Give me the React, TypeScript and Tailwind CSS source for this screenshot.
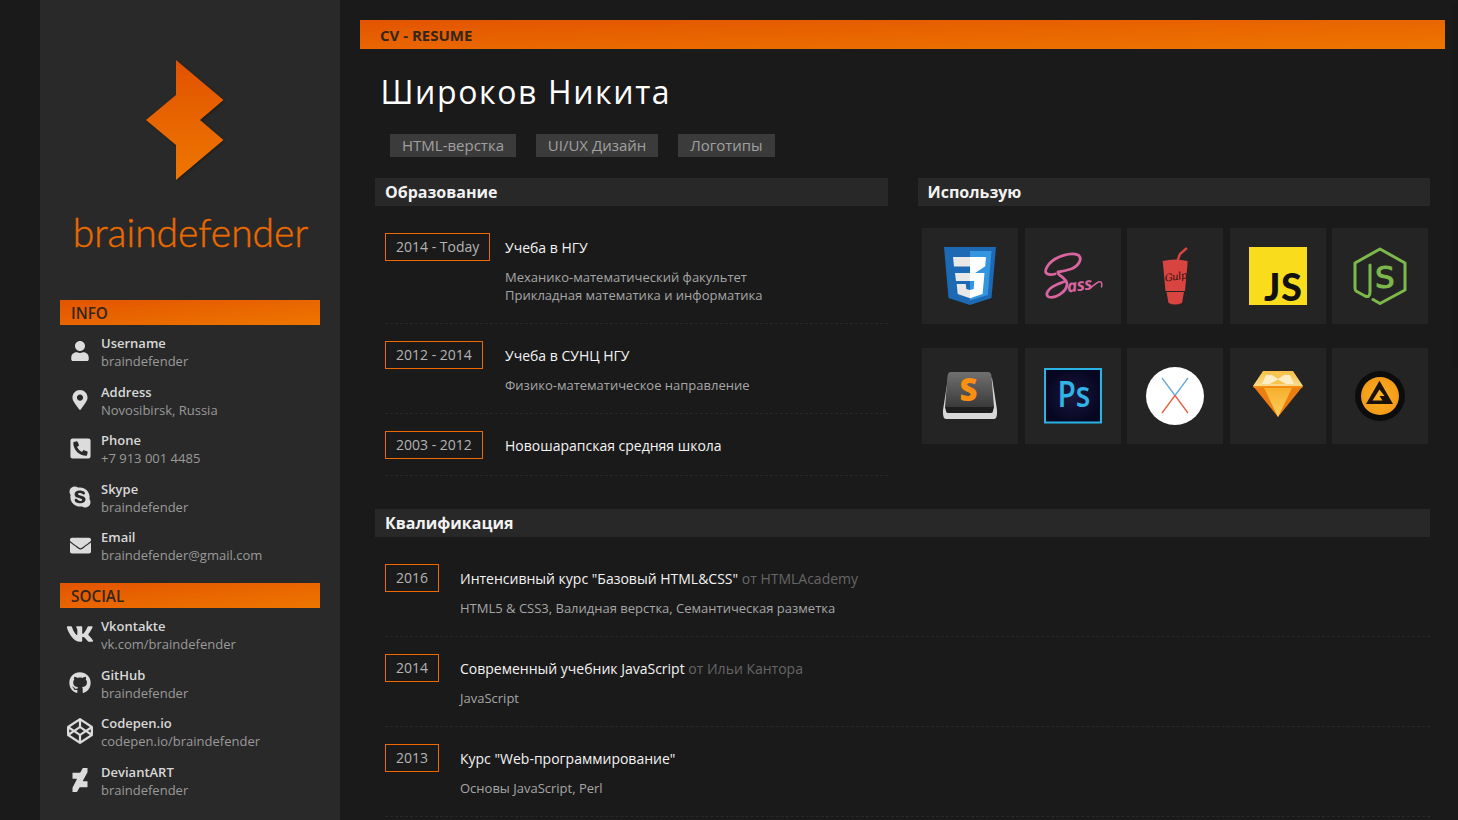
import React from "react";
import { FaUser, FaMapMarkerAlt, FaPhoneSquareAlt, FaSkype, FaEnvelope, FaVk, FaGithub, FaCodepen, FaDeviantart } from "react-icons/fa";

const bar = "bg-gradient-to-br from-[#e35400] to-[#ee7600]";

function Logo() {
  return (
    <svg viewBox="60 60 260 120" className="block w-[260px] h-[120px] drop-shadow-[1px_1px_1px_rgba(0,0,0,0.3)]">
      <defs>
        <linearGradient id="lg" x1="0" y1="0" x2="0" y2="1">
          <stop offset="0" stopColor="#e25200" />
          <stop offset="1" stopColor="#ee7700" />
        </linearGradient>
      </defs>
      <polygon points="176,60 223.5,100 200,120 223.5,140 176,180 176,145 146,120 176,95" fill="url(#lg)" />
    </svg>
  );
}

function Row({ icon, name, value }: { icon: React.ReactNode; name: string; value: string }) {
  return (
    <div className="flex items-center h-[36px]">
      <div className="w-[41px] flex justify-center text-[#dcdcdc] shrink-0 pr-[1px] pb-[2px]">{icon}</div>
      <div className="text-[13px] leading-[18px]">
        <div className="font-semibold text-[#d8d8d8]">{name}</div>
        <div className="text-[#9a9a9a]">{value}</div>
      </div>
    </div>
  );
}

function SideHead({ children }: { children: React.ReactNode }) {
  return <div className={`${bar} h-[25px] pl-[11px] text-[15.3px] leading-[27px] font-semibold text-[#33261c]`}>{children}</div>;
}

function Sidebar() {
  return (
    <aside className="w-[300px] ml-[40px] shrink-0 bg-[#292929] px-[20px] pt-[60px]">
      <Logo />
      <div className="h-[120px] pt-[24px] pl-[1px] text-center text-[39px] leading-[56px] text-[#ea6a00] [-webkit-text-stroke:0.45px_#ea6a00]" style={{ fontFamily: "Lato, sans-serif", fontWeight: 300 }}>
        braindefender
      </div>
      <SideHead>INFO</SideHead>
      <div className="flex flex-col gap-[12.5px] pt-[9px] h-[258px]">
        <Row icon={<FaUser size={20} />} name="Username" value="braindefender" />
        <Row icon={<FaMapMarkerAlt size={20} />} name="Address" value="Novosibirsk, Russia" />
        <Row icon={<FaPhoneSquareAlt size={23} />} name="Phone" value="+7 913 001 4485" />
        <Row icon={<FaSkype size={24} />} name="Skype" value="braindefender" />
        <Row icon={<FaEnvelope size={21} />} name="Email" value="braindefender@gmail.com" />
      </div>
      <SideHead>SOCIAL</SideHead>
      <div className="flex flex-col gap-[12.5px] pt-[9px]">
        <Row icon={<FaVk size={28} />} name="Vkontakte" value="vk.com/braindefender" />
        <Row icon={<FaGithub size={22} />} name="GitHub" value="braindefender" />
        <Row icon={<FaCodepen size={26} />} name="Codepen.io" value="codepen.io/braindefender" />
        <Row icon={<FaDeviantart size={24} />} name="DeviantART" value="braindefender" />
      </div>
    </aside>
  );
}

function SectionHead({ children }: { children: React.ReactNode }) {
  return <h2 className="h-[28px] bg-[#282828] pl-[10px] text-[16px] leading-[28px] font-bold text-[#f2f2f2]">{children}</h2>;
}

function Item({
  year, title, from, lines, indent, descPad,
}: { year: string; title: string; from?: string; lines?: string[]; indent: string; descPad: string }) {
  return (
    <div className={`ml-[10px] border-b border-dashed border-[#282828] pt-[17px] ${lines ? "pb-[19px]" : "pb-[16px]"}`}>
      <div className="flex">
        <div className={`${indent} shrink-0 flex items-start`}>
          <span className="h-[28px] border border-[#ee6a00] px-[10px] text-[14px] leading-[26px] text-[#b4b4b4] whitespace-nowrap">{year}</span>
        </div>
        <div className="text-[14px] leading-[28px] pt-[1px] h-[28px] text-[#f4f4f4] whitespace-nowrap">
          {title}
          {from && <span className="text-[#666666]"> {from}</span>}
        </div>
      </div>
      {lines && (
        <div className={`mt-[7px] text-[13px] leading-[18px] text-[#a6a6a6] ${descPad}`}>
          {lines.map((l) => (
            <div key={l}>{l}</div>
          ))}
        </div>
      )}
    </div>
  );
}

function Css3() {
  return (
    <svg viewBox="0 0 96 96" className="w-full h-full">
      <path d="M22 19H74L69.5 70L48 77L26.5 70Z" fill="#1d69b4" />
      <path d="M48 23H69.5L65.8 67L48 72.5Z" fill="#3395df" />
      <path d="M31 29H48V38.5H32Z M33 45H48V53H34Z M34.7 56H43.8L44.3 61L48 62V70.3L35.7 66Z" fill="#e8e8e8" />
      <path d="M48 29H64L63.2 38.5H48Z M48 38.5H63L53 45H48Z M48 45H62.5L60.6 66L48 70.3V62L51.7 61L52.2 53H48Z" fill="#fff" />
    </svg>
  );
}

function Sass() {
  return (
    <svg viewBox="0 0 96 96" className="w-full h-full">
      <path d="M30 46C20 48 18 44 24 36C31 28 46 24 53 27C58 30 54 38 46 41C40 43 33 44 33 44C31 47 43 50 42 57C41 64 30 71 24 69C19 67 23 60 33 56C36 55 38 54 41 53" fill="none" stroke="#d8659f" strokeWidth="2.8" strokeLinecap="round" />
      <path d="M65 60C69 58 73 52 76 54C77 55 77 57 76.5 59" fill="none" stroke="#d8659f" strokeWidth="1.4" strokeLinecap="round" />
      <text x="42" y="63" fontFamily="'Open Sans', sans-serif" fontStyle="italic" fontWeight="700" fontSize="17" fill="#d8659f" letterSpacing="-0.4" transform="rotate(-8 54 58)">ass</text>
    </svg>
  );
}

function Gulp() {
  return (
    <svg viewBox="0 0 96 96" className="w-full h-full">
      <path d="M50 34L53 26L60 20" fill="none" stroke="#d8443f" strokeWidth="2.4" />
      <path d="M35.5 33Q48 30 60.5 33L60.5 36L58 63H38.5L36 36Z" fill="#d8443f" />
      <path d="M39.5 64H57L55 75Q48 78 41.5 75Z" fill="#d8443f" />
      <text x="37.5" y="52" fontFamily="'DejaVu Serif', serif" fontStyle="italic" fontSize="10" fill="#2a0f0e" letterSpacing="-0.5" transform="rotate(-8 48 48)">Gulp</text>
    </svg>
  );
}

function Js() {
  return (
    <svg viewBox="0 0 96 96" className="w-full h-full">
      <rect x="19" y="19" width="58" height="58" fill="#f9dd1d" />
      <text x="34" y="72.5" fontFamily="Lato, sans-serif" fontWeight="900" fontSize="38" fill="#111" letterSpacing="0.5">JS</text>
    </svg>
  );
}

function Node() {
  return (
    <svg viewBox="0 0 96 96" className="w-full h-full">
      <path d="M38 37V64Q38 70 33 68L24 63Q23 62 23 60V35L48 21L73 35V62L48 75.5L41 71.5" fill="none" stroke="#7cb84a" strokeWidth="3" strokeLinejoin="round" strokeLinecap="round" />
      <text x="43" y="60" fontFamily="'DejaVu Sans', sans-serif" fontSize="31" fill="#7cb84a" stroke="#7cb84a" strokeWidth="1">S</text>
    </svg>
  );
}

function Sublime() {
  return (
    <svg viewBox="0 0 96 96" className="w-full h-full">
      <defs>
        <linearGradient id="sb" x1="0" y1="0" x2="0" y2="1">
          <stop offset="0" stopColor="#707070" />
          <stop offset="1" stopColor="#3a3a3a" />
        </linearGradient>
      </defs>
      <path d="M26 30H70L75 62Q75.5 71 72 71H24Q20.5 71 21 62Z" fill="#d8d8d8" />
      <path d="M29 24H66Q69 24 69.5 28L72 59H23L25.5 28Q26 24 29 24Z" fill="url(#sb)" />
      <path d="M23 59H72L71 63Q71 65 69 65H26Q24 65 24 63Z" fill="#1e1e1e" />
      <text x="37.5" y="53" fontFamily="'Open Sans', sans-serif" fontWeight="800" fontSize="31" fill="#fb8f10">S</text>
    </svg>
  );
}

function Ps() {
  return (
    <svg viewBox="0 0 96 96" className="w-full h-full">
      <defs>
        <radialGradient id="ps">
          <stop offset="0" stopColor="#1c1740" />
          <stop offset="1" stopColor="#070722" />
        </radialGradient>
      </defs>
      <rect x="20" y="21" width="56" height="53.5" fill="url(#ps)" stroke="#2ab4e6" strokeWidth="2" />
      <text transform="translate(32.5 59) scale(0.83 1)" fontFamily="'Open Sans', sans-serif" fontWeight="600" fontSize="36" fill="#31b4e6">Ps</text>
    </svg>
  );
}

function Mac() {
  return (
    <svg viewBox="0 0 96 96" className="w-full h-full">
      <circle cx="48" cy="48" r="29" fill="#fff" />
      <path d="M35 30L48 47.5M61 30L48 47.5" stroke="#69a9d8" strokeWidth="1.3" />
      <path d="M35 65L48 47.5M61 65L48 47.5" stroke="#e5603f" strokeWidth="1.3" />
    </svg>
  );
}

function Sketch() {
  return (
    <svg viewBox="0 0 96 96" className="w-full h-full">
      <defs>
        <linearGradient id="sk1" x1="0" y1="0" x2="0" y2="1">
          <stop offset="0" stopColor="#f9c046" />
          <stop offset="1" stopColor="#f7dc8c" />
        </linearGradient>
        <linearGradient id="sk2" x1="0" y1="0" x2="0" y2="1">
          <stop offset="0" stopColor="#f7ae2c" />
          <stop offset="1" stopColor="#fbd05e" />
        </linearGradient>
      </defs>
      <polygon points="33,23 63,23 73,38 23,38" fill="url(#sk1)" />
      <polygon points="23,38 73,38 48,69" fill="#ec7d10" />
      <polygon points="34,40 62,40 48,69" fill="url(#sk2)" />
      <polygon points="23,38 73,38 72,40 24,40" fill="#f38a12" />
      <polygon points="36,27 60,27 64,36 32,36" fill="#fdeec6" />
      <polygon points="42,27 54,27 48,31" fill="#f9c350" />
      <polygon points="40,36 56,36 48,31.5" fill="#f9c350" />
    </svg>
  );
}

function Aimp() {
  return (
    <svg viewBox="0 0 96 96" className="w-full h-full">
      <defs>
        <radialGradient id="am">
          <stop offset="0" stopColor="#fdb322" />
          <stop offset="1" stopColor="#f39a18" />
        </radialGradient>
      </defs>
      <circle cx="48" cy="48" r="25" fill="#0c0c0c" />
      <circle cx="48" cy="48" r="19" fill="url(#am)" />
      <path d="M47.5 32.7L61 56H34ZM47.5 41.5L40.5 52.5H50.5L47.5 48H52.5L47.5 41.5Z" fill="#1a1208" fillRule="evenodd" />
    </svg>
  );
}

const row1 = [Css3, Sass, Gulp, Js, Node];
const row2 = [Sublime, Ps, Mac, Sketch, Aimp];

function Tile({ C }: { C: () => React.ReactNode }) {
  return (
    <div className="w-[96px] h-[96px] bg-[#242424]">
      <C />
    </div>
  );
}

export default function App() {
  return (
    <div className="relative flex h-[820px] overflow-hidden bg-[#1a1a1a]" style={{ fontFamily: "'Open Sans', sans-serif" }}>
      <Sidebar />
      <main className="flex-1 ml-[20px] mr-[13px] pt-[20px]">
        <div className={`${bar} h-[29px] pl-[20px] text-[15px] leading-[30px] font-bold text-[#33261c]`}>CV - RESUME</div>
        <h1 className="pl-[20.5px] pt-[21px] h-[85px] text-[32px] leading-[44px] tracking-[1.6px] font-medium text-white">Широков Никита</h1>
        <div className="flex gap-[19.8px] pl-[30px] h-[44px]">
          {["HTML-верстка", "UI/UX Дизайн", "Логотипы"].map((t) => (
            <span key={t} className="h-[23px] bg-[#3b3b3b] px-[12px] text-[15px] leading-[22px] text-[#a0a0a0]">{t}</span>
          ))}
        </div>
        <div className="ml-[15px] w-[1055px]">
          <div className="grid grid-cols-2 gap-[30px] h-[331px]">
            <section>
              <SectionHead>Образование</SectionHead>
              <div className="pt-[10px]">
                <Item indent="w-[120px]" descPad="pl-[120px]" year="2014 - Today" title="Учеба в НГУ" lines={["Механико-математический факультет", "Прикладная математика и информатика"]} />
                <Item indent="w-[120px]" descPad="pl-[120px]" year="2012 - 2014" title="Учеба в СУНЦ НГУ" lines={["Физико-математическое направление"]} />
                <Item indent="w-[120px]" descPad="pl-[120px]" year="2003 - 2012" title="Новошарапская средняя школа" />
              </div>
            </section>
            <section>
              <SectionHead>Использую</SectionHead>
              <div className="pl-[4.6px] pr-[1.9px] pt-[22px] flex flex-col gap-[24px]">
                <div className="flex justify-between">{row1.map((C, i) => <Tile key={i} C={C} />)}</div>
                <div className="flex justify-between">{row2.map((C, i) => <Tile key={i} C={C} />)}</div>
              </div>
            </section>
          </div>
          <section>
            <SectionHead>Квалификация</SectionHead>
            <div className="pt-[10px]">
              <Item indent="w-[75px]" descPad="pl-[75px]" year="2016" title={'Интенсивный курс "Базовый HTML&CSS"'} from="от HTMLAcademy" lines={["HTML5 & CSS3, Валидная верстка, Семантическая разметка"]} />
              <Item indent="w-[75px]" descPad="pl-[75px]" year="2014" title="Современный учебник JavaScript" from="от Ильи Кантора" lines={["JavaScript"]} />
              <Item indent="w-[75px]" descPad="pl-[75px]" year="2013" title={'Курс "Web-программирование"'} lines={["Основы JavaScript, Perl"]} />
            </div>
          </section>
        </div>
      </main>
      <div className="absolute right-0 top-[3px] w-[6px] h-[365px] bg-[#181818]" />
    </div>
  );
}
